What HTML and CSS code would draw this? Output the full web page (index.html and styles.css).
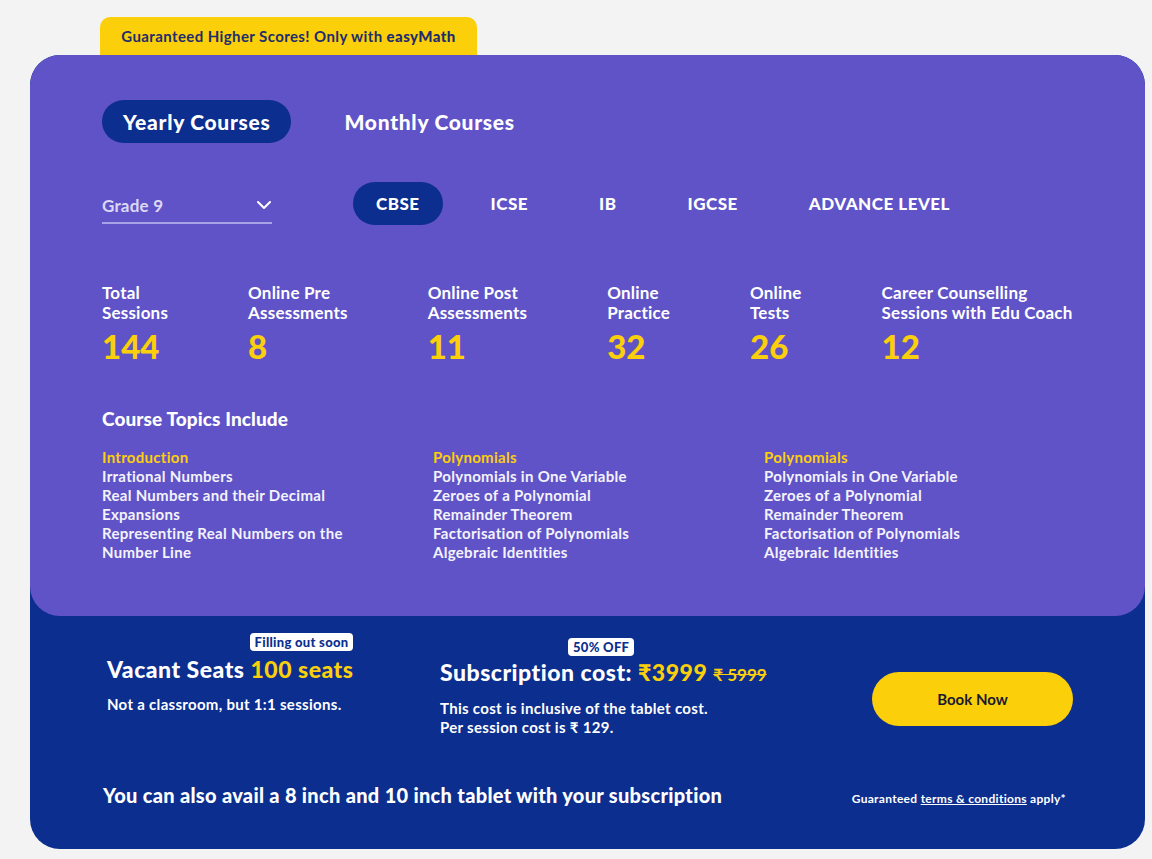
FILE: index.html
```html
<!DOCTYPE html>
<html lang="en">
<head>
<meta charset="utf-8">
<title>easyMath Courses</title>
<link rel="stylesheet" href="styles.css">
</head>
<body>
<div class="page">
  <div class="promo-tab">Guaranteed Higher Scores! Only with <b>easyMath</b></div>
  <div class="card">
    <section class="panel">
      <div class="toggle">
        <span class="pill pill-lg active">Yearly Courses</span>
        <span class="pill pill-lg">Monthly Courses</span>
      </div>
      <div class="filters">
        <div class="select">
          <span>Grade 9</span>
          <svg class="chev" width="16" height="16" viewBox="0 0 16 16"><polyline points="2,5 8,11 14,5" fill="none" stroke="#ffffff" stroke-width="2" stroke-linecap="round" stroke-linejoin="round"/></svg>
        </div>
        <div class="boards">
          <span class="pill active">CBSE</span>
          <span class="pill">ICSE</span>
          <span class="pill">IB</span>
          <span class="pill">IGCSE</span>
          <span class="pill">ADVANCE LEVEL</span>
        </div>
      </div>
      <div class="stats">
        <div class="stat"><div class="label">Total<br>Sessions</div><div class="num">144</div></div>
        <div class="stat"><div class="label">Online Pre<br>Assessments</div><div class="num">8</div></div>
        <div class="stat"><div class="label">Online Post<br>Assessments</div><div class="num">11</div></div>
        <div class="stat"><div class="label">Online<br>Practice</div><div class="num">32</div></div>
        <div class="stat"><div class="label">Online<br>Tests</div><div class="num">26</div></div>
        <div class="stat"><div class="label">Career Counselling<br>Sessions with Edu Coach</div><div class="num">12</div></div>
      </div>
      <h3 class="topics-title">Course Topics Include</h3>
      <div class="topics">
        <ul>
          <li class="head">Introduction</li>
          <li>Irrational Numbers</li>
          <li>Real Numbers and their Decimal Expansions</li>
          <li>Representing Real Numbers on the Number Line</li>
        </ul>
        <ul>
          <li class="head">Polynomials</li>
          <li>Polynomials in One Variable</li>
          <li>Zeroes of a Polynomial</li>
          <li>Remainder Theorem</li>
          <li>Factorisation of Polynomials</li>
          <li>Algebraic Identities</li>
        </ul>
        <ul>
          <li class="head">Polynomials</li>
          <li>Polynomials in One Variable</li>
          <li>Zeroes of a Polynomial</li>
          <li>Remainder Theorem</li>
          <li>Factorisation of Polynomials</li>
          <li>Algebraic Identities</li>
        </ul>
      </div>
    </section>
    <section class="bottom">
      <div class="offer-row">
        <div class="offer seats">
          <div class="heading-wrap right">
            <span class="badge">Filling out soon</span>
            <h2>Vacant Seats <span class="yellow">100 seats</span></h2>
          </div>
          <p>Not a classroom, but 1:1 sessions.</p>
        </div>
        <div class="offer price">
          <div class="heading-wrap">
            <span class="badge badge-off">50% OFF</span>
            <h2>Subscription cost: <span class="yellow">₹3999</span> <s class="old">₹ 5999</s></h2>
          </div>
          <p>This cost is inclusive of the tablet cost.<br>Per session cost is ₹ 129.</p>
        </div>
        <button class="book">Book Now</button>
      </div>
      <div class="footer-row">
        <p class="tablet">You can also avail a 8 inch and 10 inch tablet with your subscription</p>
        <p class="terms">Guaranteed <a href="#">terms &amp; conditions</a> apply*</p>
      </div>
    </section>
  </div>
</div>
</body>
</html>
```
FILE: styles.css
```css
* { box-sizing: border-box; }
html, body { margin: 0; padding: 0; }
body {
  background: #f3f3f3;
  font-family: "Lato", "Noto Sans", sans-serif;
  color: #ffffff;
}
.page {
  padding: 17px 7px 11px 30px;
}
.promo-tab {
  display: inline-block;
  margin-left: 70px;
  width: 377px;
  height: 38px;
  line-height: 38px;
  text-align: center;
  background: #fccf0b;
  color: #1e2d6b;
  font-size: 15px;
  font-weight: 700;
  letter-spacing: 0.4px;
  border-radius: 10px 10px 0 0;
  vertical-align: bottom;
}
.promo-tab b { font-weight: 900; }
.card {
  background: #0b2e8f;
  border-radius: 30px;
  overflow: hidden;
}
.panel {
  background: #6053c7;
  border-radius: 30px;
  padding: 45px 72px 54px 72px;
}
.pill {
  display: inline-flex;
  align-items: center;
  justify-content: center;
  height: 43px;
  padding: 0 23px;
  border-radius: 22px;
  font-size: 17px;
  font-weight: 900;
  color: #ffffff;
  letter-spacing: 0.5px;
}
.pill.active { background: #0b2e8f; }
.toggle { display: flex; gap: 32px; }
.pill-lg {
  font-size: 21px;
  letter-spacing: 0.7px;
  padding: 0 21px;
}
.filters {
  display: flex;
  align-items: flex-start;
  margin-top: 39px;
}
.select {
  width: 170px;
  height: 42px;
  display: flex;
  align-items: center;
  justify-content: space-between;
  border-bottom: 2px solid #a8a1e6;
  color: #dcd8f6;
  font-size: 17px;
  font-weight: 700;
  letter-spacing: 0.2px;
}
.select span { padding-top: 6px; }
.chev { margin-top: 6px; }
.boards {
  display: flex;
  gap: 25px;
  margin-left: 81px;
}
.stats {
  display: flex;
  gap: 80px;
  margin-top: 58px;
}
.label {
  font-size: 17px;
  font-weight: 700;
  letter-spacing: 0.2px;
  line-height: 20px;
}
.num {
  font-size: 33px;
  font-weight: 900;
  color: #fccf0b;
  margin-top: 5px;
  line-height: 36px;
}
.topics-title {
  margin: 44px 0 0 0;
  font-size: 19px;
  font-weight: 900;
  letter-spacing: 0.1px;
  line-height: 22px;
}
.topics {
  display: grid;
  grid-template-columns: repeat(3, 260px);
  column-gap: 71px;
  margin-top: 18px;
}
.topics ul {
  list-style: none;
  margin: 0;
  padding: 0;
}
.topics li {
  font-size: 15px;
  font-weight: 700;
  letter-spacing: 0.3px;
  line-height: 19px;
  color: #f4f3fc;
}
.topics li.head { color: #fccf0b; }
.bottom {
  padding: 15px 72px 42px 77px;
}
.offer-row {
  display: flex;
  align-items: flex-start;
}
.heading-wrap {
  display: inline-flex;
  flex-direction: column;
}
.heading-wrap.right { align-items: flex-end; }
.badge {
  background: #ffffff;
  color: #0b2e8f;
  font-size: 13px;
  font-weight: 900;
  letter-spacing: 0.3px;
  line-height: 18px;
  padding: 0 5px;
  border-radius: 4px;
}
.badge-off {
  align-self: flex-start;
  margin-left: 128px;
}
.offer h2 {
  margin: 5px 0 0 0;
  font-size: 23px;
  font-weight: 900;
  letter-spacing: 0.5px;
  line-height: 26px;
}
.yellow { color: #fccf0b; }
.old {
  color: #fccf0b;
  font-size: 17px;
  font-weight: 700;
  letter-spacing: 0;
}
.offer p {
  margin: 13px 0 0 0;
  font-size: 15px;
  font-weight: 700;
  letter-spacing: 0.3px;
  line-height: 19px;
}
.seats { width: 333px; }
.price { margin-top: 5px; }
.price h2 { margin-top: 3px; }
.price p { margin-top: 11px; }
.book {
  margin-left: auto;
  margin-top: 41px;
  width: 201px;
  height: 54px;
  border: 0;
  border-radius: 27px;
  background: #fccf0b;
  color: #1a1a2e;
  font-family: inherit;
  font-size: 15px;
  font-weight: 700;
}
.footer-row {
  display: flex;
  align-items: baseline;
  justify-content: space-between;
  margin-top: 46px;
  margin-left: -4px;
}
.tablet {
  margin: 0;
  font-size: 20px;
  font-weight: 900;
  letter-spacing: 0.3px;
  line-height: 24px;
}
.terms {
  margin: 0 7px 0 0;
  font-size: 12px;
  font-weight: 700;
  letter-spacing: 0.3px;
}
.terms a { color: #ffffff; }
```
